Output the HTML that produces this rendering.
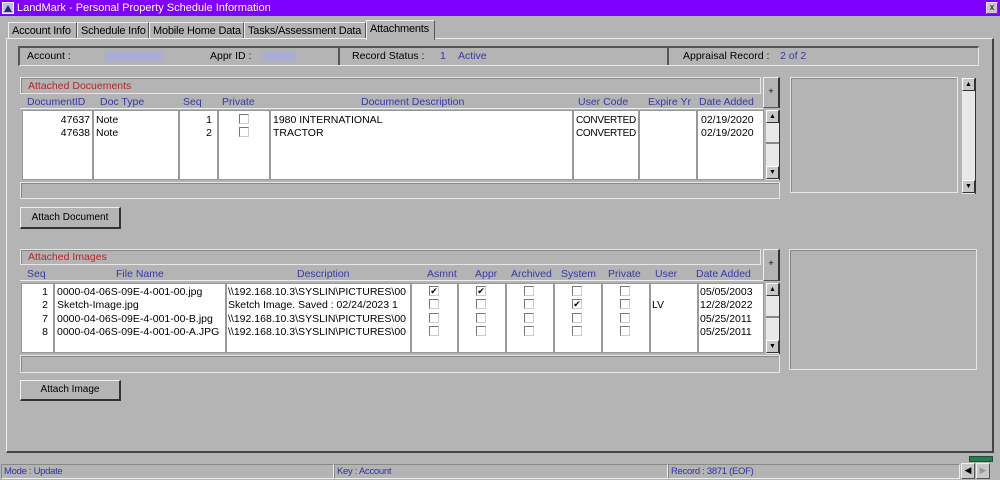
<!DOCTYPE html>
<html><head><style>
*{box-sizing:border-box;margin:0;padding:0}
body{width:1000px;height:480px;background:#b4b4b4;font-family:"Liberation Sans",Tahoma,sans-serif;font-size:10.5px;color:#000;position:relative;overflow:hidden}
.a{position:absolute}
.t{position:absolute;white-space:nowrap;overflow:hidden}
.raised{border-top:1px solid #eee;border-left:1px solid #eee;border-right:1px solid #555;border-bottom:1px solid #555}
.etch{border:1px solid #e6e6e6;box-shadow:inset 1px 1px 0 #888}
.bl{color:#3838a8}
.rd{color:#b02828}
.cell{position:absolute;background:#fff;border:1px solid #999}
.cb{position:absolute;width:10px;height:10px;border:1px solid #777;border-right-color:#ccc;border-bottom-color:#ccc;background:#fff;font-size:9px;line-height:8px;text-align:center}
.sb{position:absolute;background:#e8e8e8;border-right:1px solid #333}
.sbb{position:absolute;left:0;width:13px;height:13px;background:#c8c8c8;border-top:1px solid #fff;border-left:1px solid #fff;border-right:1px solid #333;border-bottom:1px solid #333;font-size:7px;text-align:center;line-height:11px}
.tab{position:absolute;top:22px;height:17px;border:1px solid #eee;border-right-color:#555;border-bottom:none;padding:2px 0 0 3px;font-size:11px;letter-spacing:-0.2px;background:#b4b4b4;white-space:nowrap;overflow:hidden}
.btn{position:absolute;background:#b4b4b4;border-top:1px solid #eee;border-left:1px solid #eee;border-right:2px solid #333;border-bottom:2px solid #333;text-align:center;font-size:10px;white-space:nowrap}
.st{position:absolute;top:464px;height:15px;border:1px solid #888;border-right-color:#eee;border-bottom-color:#eee;color:#3030a8;font-size:9.5px;padding:1px 2px;letter-spacing:-0.3px;white-space:nowrap}
</style></head><body>
<div class="a" style="left:0;top:0;width:1000px;height:16px;background:#7f00ff"></div>
<div class="a" style="left:2px;top:2px;width:12px;height:12px;background:#c0c0d8;border:1px solid #fff"><div class="a" style="left:1px;top:2px;width:0;height:0;border-left:4px solid transparent;border-right:4px solid transparent;border-bottom:7px solid #203070"></div></div>
<div class="t" style="left:17px;top:2px;color:#fff;font-size:11px">LandMark - Personal Property Schedule Information</div>
<div class="a raised" style="left:986px;top:2px;width:12px;height:12px;background:#c8c8c8;font-size:9px;line-height:9px;text-align:center">x</div>

<div class="tab" style="left:8px;width:69px">Account Info</div>
<div class="tab" style="left:77px;width:72px">Schedule Info</div>
<div class="tab" style="left:149px;width:95px">Mobile Home Data</div>
<div class="tab" style="left:244px;width:122px">Tasks/Assessment Data</div>
<div class="tab" style="left:366px;top:20px;width:69px;height:20px;z-index:2">Attachments</div>
<div class="a" style="left:6px;top:38px;width:988px;height:415px;border-top:1px solid #eee;border-left:1px solid #eee;border-right:2px solid #444;border-bottom:2px solid #444"></div>

<div class="a" style="left:18px;top:46px;width:961px;height:20px;border:1px solid #e6e6e6;border-top:2px solid #555;border-left:2px solid #555"></div>
<div class="a" style="left:338px;top:46px;width:2px;height:19px;background:#555"></div>
<div class="a" style="left:667px;top:46px;width:2px;height:19px;background:#555"></div>
<div class="t" style="left:27px;top:50px">Account :</div>
<div class="a" style="left:105px;top:52px;width:58px;height:9px;background:#a8acd8;filter:blur(1.5px)"></div>
<div class="t" style="left:210px;top:50px">Appr ID :</div>
<div class="a" style="left:263px;top:52px;width:32px;height:9px;background:#a8acd8;filter:blur(1.5px)"></div>
<div class="t" style="left:352px;top:50px">Record Status :</div>
<div class="t bl" style="left:440px;top:50px">1</div>
<div class="t bl" style="left:458px;top:50px">Active</div>
<div class="t" style="left:683px;top:50px">Appraisal Record :</div>
<div class="t bl" style="left:780px;top:50px">2 of 2</div>

<!-- Docs -->
<div class="a etch" style="left:20px;top:77px;width:741px;height:17px"></div>
<div class="t rd" style="left:28px;top:80px">Attached Docuements</div>
<div class="a raised" style="left:763px;top:77px;width:17px;height:31px;border-right:2px solid #333;font-size:9px;text-align:center;line-height:26px">+</div>
<div class="a" style="left:20px;top:94px;width:743px;height:15px;border-bottom:1px solid #eee"></div>
<div class="t bl" style="left:27px;top:96px">DocumentID</div>
<div class="t bl" style="left:100px;top:96px">Doc Type</div>
<div class="t bl" style="left:183px;top:96px">Seq</div>
<div class="t bl" style="left:222px;top:96px">Private</div>
<div class="t bl" style="left:361px;top:96px">Document Description</div>
<div class="t bl" style="left:578px;top:96px">User Code</div>
<div class="t bl" style="left:648px;top:96px">Expire Yr</div>
<div class="t bl" style="left:699px;top:96px">Date Added</div>
<div class="cell" style="left:22px;top:110px;width:71px;height:70px"></div>
<div class="cell" style="left:93px;top:110px;width:86px;height:70px"></div>
<div class="cell" style="left:179px;top:110px;width:39px;height:70px"></div>
<div class="cell" style="left:218px;top:110px;width:52px;height:70px"></div>
<div class="cell" style="left:270px;top:110px;width:303px;height:70px"></div>
<div class="cell" style="left:573px;top:110px;width:66px;height:70px"></div>
<div class="cell" style="left:639px;top:110px;width:58px;height:70px"></div>
<div class="cell" style="left:697px;top:110px;width:67px;height:70px"></div>
<div class="t" style="left:46px;top:114px;width:44px;text-align:right;line-height:13px">47637<br>47638</div>
<div class="t" style="left:96px;top:114px;line-height:13px">Note<br>Note</div>
<div class="t" style="left:190px;top:114px;width:22px;text-align:right;line-height:13px">1<br>2</div>
<div class="cb" style="left:239px;top:114px"></div><div class="cb" style="left:239px;top:127px"></div>
<div class="t" style="left:273px;top:114px;line-height:13px">1980 INTERNATIONAL<br>TRACTOR</div>
<div class="t" style="left:576px;top:114px;width:62px;line-height:13px;font-size:10px;letter-spacing:-0.3px">CONVERTED<br>CONVERTED</div>
<div class="t" style="left:701px;top:114px;line-height:13px">02/19/2020<br>02/19/2020</div>
<div class="sb" style="left:766px;top:110px;width:14px;height:70px"><div class="sbb" style="top:0">▲</div><div class="a" style="left:0;top:32px;width:13px;height:2px;background:#888"></div><div class="sbb" style="top:56px">▼</div></div>
<div class="a etch" style="left:20px;top:182px;width:760px;height:17px"></div>
<div class="btn" style="left:20px;top:207px;width:101px;height:22px;line-height:19px">Attach Document</div>
<div class="a etch" style="left:790px;top:77px;width:168px;height:116px"></div>
<div class="sb" style="left:962px;top:78px;width:14px;height:116px"><div class="sbb" style="top:0">▲</div><div class="sbb" style="top:102px">▼</div></div>

<!-- Images -->
<div class="a etch" style="left:20px;top:249px;width:741px;height:16px"></div>
<div class="t rd" style="left:28px;top:251px">Attached Images</div>
<div class="a raised" style="left:763px;top:249px;width:17px;height:32px;border-right:2px solid #333;font-size:9px;text-align:center;line-height:26px">+</div>
<div class="a" style="left:20px;top:265px;width:743px;height:16px;border-bottom:1px solid #eee"></div>
<div class="t bl" style="left:27px;top:268px">Seq</div>
<div class="t bl" style="left:116px;top:268px">File Name</div>
<div class="t bl" style="left:297px;top:268px">Description</div>
<div class="t bl" style="left:427px;top:268px">Asmnt</div>
<div class="t bl" style="left:475px;top:268px">Appr</div>
<div class="t bl" style="left:511px;top:268px">Archived</div>
<div class="t bl" style="left:561px;top:268px">System</div>
<div class="t bl" style="left:608px;top:268px">Private</div>
<div class="t bl" style="left:655px;top:268px">User</div>
<div class="t bl" style="left:696px;top:268px">Date Added</div>
<div class="cell" style="left:21px;top:283px;width:33px;height:70px"></div>
<div class="cell" style="left:54px;top:283px;width:172px;height:70px"></div>
<div class="cell" style="left:226px;top:283px;width:185px;height:70px"></div>
<div class="cell" style="left:411px;top:283px;width:47px;height:70px"></div>
<div class="cell" style="left:458px;top:283px;width:48px;height:70px"></div>
<div class="cell" style="left:506px;top:283px;width:48px;height:70px"></div>
<div class="cell" style="left:554px;top:283px;width:48px;height:70px"></div>
<div class="cell" style="left:602px;top:283px;width:48px;height:70px"></div>
<div class="cell" style="left:650px;top:283px;width:48px;height:70px"></div>
<div class="cell" style="left:698px;top:283px;width:66px;height:70px"></div>
<div class="t" style="left:30px;top:286px;width:18px;text-align:right;line-height:13.3px">1<br>2<br>7<br>8</div>
<div class="t" style="left:57px;top:286px;width:167px;line-height:13.3px">0000-04-06S-09E-4-001-00.jpg<br>Sketch-Image.jpg<br>0000-04-06S-09E-4-001-00-B.jpg<br>0000-04-06S-09E-4-001-00-A.JPG</div>
<div class="t" style="left:228px;top:286px;width:180px;line-height:13.3px">\\192.168.10.3\SYSLIN\PICTURES\00<br>Sketch Image. Saved : 02/24/2023 1<br>\\192.168.10.3\SYSLIN\PICTURES\00<br>\\192.168.10.3\SYSLIN\PICTURES\00</div>
<div class="cb" style="left:429px;top:286px">✔</div><div class="cb" style="left:429px;top:299px"></div><div class="cb" style="left:429px;top:313px"></div><div class="cb" style="left:429px;top:326px"></div>
<div class="cb" style="left:476px;top:286px">✔</div><div class="cb" style="left:476px;top:299px"></div><div class="cb" style="left:476px;top:313px"></div><div class="cb" style="left:476px;top:326px"></div>
<div class="cb" style="left:524px;top:286px"></div><div class="cb" style="left:524px;top:299px"></div><div class="cb" style="left:524px;top:313px"></div><div class="cb" style="left:524px;top:326px"></div>
<div class="cb" style="left:572px;top:286px"></div><div class="cb" style="left:572px;top:299px">✔</div><div class="cb" style="left:572px;top:313px"></div><div class="cb" style="left:572px;top:326px"></div>
<div class="cb" style="left:620px;top:286px"></div><div class="cb" style="left:620px;top:299px"></div><div class="cb" style="left:620px;top:313px"></div><div class="cb" style="left:620px;top:326px"></div>
<div class="t" style="left:652px;top:299px">LV</div>
<div class="t" style="left:700px;top:286px;line-height:13.3px">05/05/2003<br>12/28/2022<br>05/25/2011<br>05/25/2011</div>
<div class="sb" style="left:766px;top:283px;width:14px;height:71px"><div class="sbb" style="top:0">▲</div><div class="a" style="left:0;top:33px;width:13px;height:2px;background:#888"></div><div class="sbb" style="top:57px">▼</div></div>
<div class="a etch" style="left:20px;top:355px;width:760px;height:18px"></div>
<div class="btn" style="left:20px;top:380px;width:101px;height:21px;line-height:18px">Attach Image</div>
<div class="a etch" style="left:789px;top:249px;width:188px;height:121px"></div>

<!-- status -->
<div class="a" style="left:969px;top:456px;width:24px;height:6px;background:#2a7a4a;border:1px solid #154"></div>
<div class="st" style="left:1px;width:333px">Mode : Update</div>
<div class="st" style="left:334px;width:334px">Key : Account</div>
<div class="st" style="left:668px;width:292px">Record : 3871 (EOF)</div>
<div class="a raised" style="left:961px;top:463px;width:14px;height:16px;background:#c8c8c8;font-size:9px;text-align:center;line-height:13px">◀</div>
<div class="a raised" style="left:976px;top:463px;width:14px;height:16px;background:#c8c8c8;color:#999;font-size:9px;text-align:center;line-height:13px">▶</div>
</body></html>
